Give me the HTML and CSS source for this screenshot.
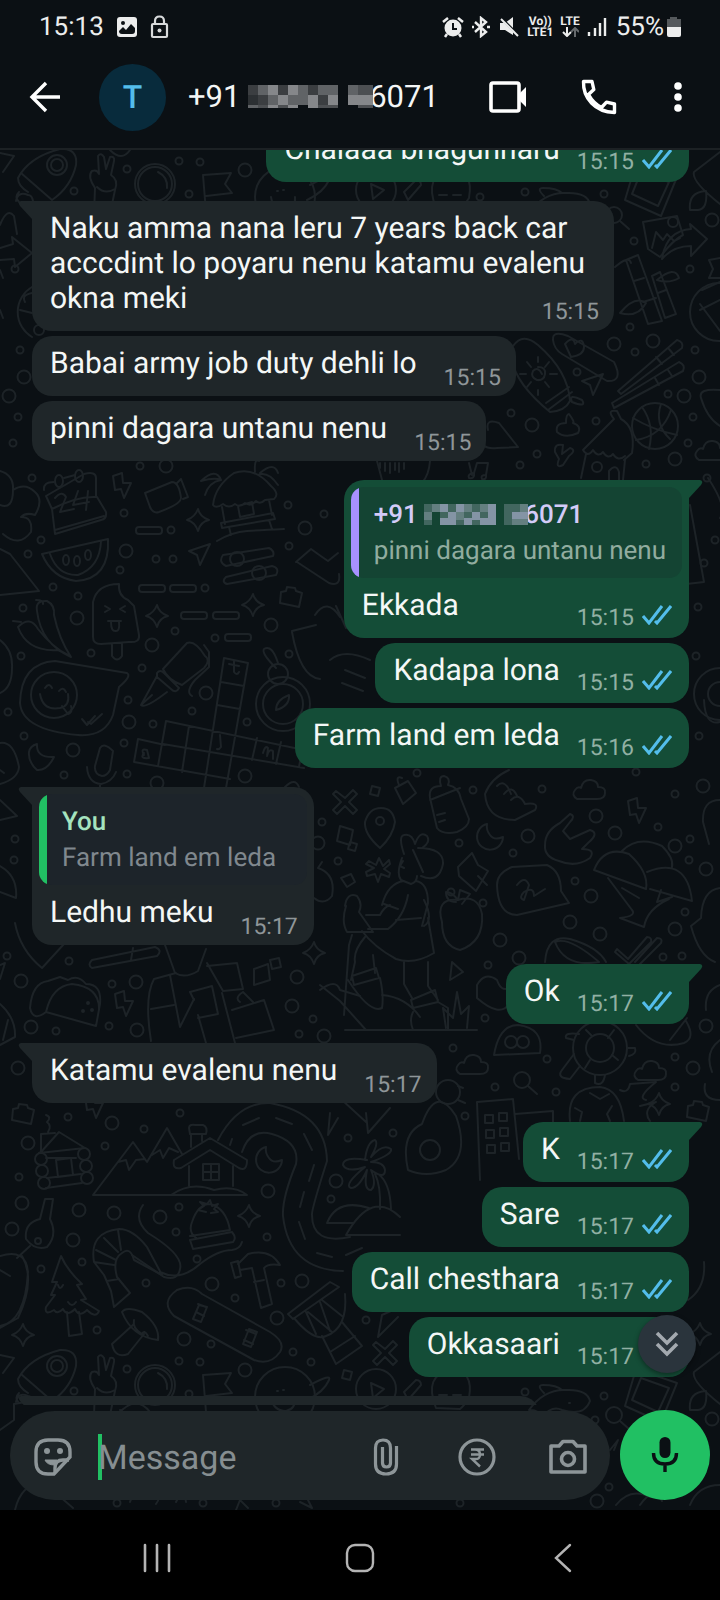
FILE: index.html
```html
<!DOCTYPE html>
<html lang="en">
<head>
<meta charset="utf-8">
<meta name="viewport" content="width=device-width, initial-scale=1">
<title>Chat</title>
<link rel="stylesheet" href="styles.css">
</head>
<body>
<svg class="defs" aria-hidden="true">
  <symbol id="ticks" viewBox="0 0 30 20"><path d="M1 11l6 7L20 1M13 16l2 2L29 1" fill="none" stroke="currentColor" stroke-width="3"/></symbol>
  <symbol id="tail" viewBox="0 0 14 24"><path d="M0 0h11q4 1 1 5L0 18z" fill="currentColor"/></symbol>
  <path id="rings-small" d="M127 169h0M179 161h0M200 162h0M74 191h0M189 194h0M32 478h0M140 466h0M124 513h0M41 540h0M28 554h0M120 570h0M53 587h0M78 596h0M23 608h0M21 656h0M91 653h0M142 668h0M128 700h0M8 712h0M24 736h0M124 743h0M153 724h0M192 711h0M247 722h0M215 638h0M289 654h0M175 631h0M156 559h0M173 559h0M171 530h0M288 505h0M289 546h0M324 514h0M205 588h0M64 775h0M127 774h0M473 790h0M542 789h0M459 843h0M513 853h0M338 861h0M451 892h0M483 903h0M575 881h0M658 827h0M675 794h0M690 839h0M689 860h0M685 912h0M488 965h0M485 1018h0M453 1048h0M547 1059h0M495 1087h0M556 1092h0M675 1057h0M663 957h0M682 956h0M675 1087h0M636 772h0M465 1116h0M393 1133h0M15 839h0M14 860h0M7 956h0M69 961h0M112 984h0M56 1031h0M109 1026h0M313 1019h0M299 1034h0M322 822h0M180 1113h0M68 1117h0M19 1177h0M41 1269h0M82 1262h0M105 1146h0M144 1129h0M179 1207h0M176 1232h0M197 1259h0M146 1283h0M235 1298h0M267 1237h0M281 1283h0M211 1344h0M97 1330h0M331 1199h0M348 1138h0M366 1320h0M293 1352h0M311 1362h0M179 1361h0M200 1362h0M127 1369h0M74 1391h0M189 1394h0M604 194h0M480 197h0M525 192h0M634 241h0M690 269h0M630 327h0M695 350h0M635 352h0M577 372h0M668 394h0M693 417h0M511 413h0M596 421h0M688 443h0M646 464h0M537 454h0M520 465h0M525 1392h0M604 1396h0M595 1420h0M609 1487h0M15 269h0M20 350h0M18 417h0M13 443h0M707 478h0M715 540h0M704 563h0M698 607h0M696 656h0M699 736h0M417 773h0M117 1503h0M203 1503h0M276 1503h0M460 1503h0"/>
  <path id="rings-large" d="M245 170h0M126 551h0M166 466h0M77 618h0M152 645h0M206 693h0M271 625h0M73 750h0M157 783h0M305 528h0M129 722h0M245 776h0M596 816h0M528 836h0M615 833h0M675 846h0M591 896h0M600 934h0M570 922h0M675 929h0M500 940h0M519 958h0M706 869h0M703 786h0M706 1026h0M693 1068h0M31 1027h0M137 1030h0M21 981h0M136 982h0M297 977h0M292 1006h0M324 1036h0M318 843h0M18 1068h0M112 1123h0M28 1143h0M22 1203h0M12 1229h0M79 1210h0M73 1240h0M114 1213h0M160 1217h0M212 1284h0M268 1191h0M302 1281h0M277 1318h0M184 1339h0M336 1181h0M245 1370h0M712 220h0M653 341h0M614 344h0M699 377h0M684 396h0M532 425h0M675 459h0M24 377h0M9 396h0M712 1419h0M597 1501h0"/>
  <g id="spark"><path d="M0-11q2 8 11 11q-9 2-11 11q-3-9-11-11q8-3 11-11z"/></g>
  <g id="bolt"><path d="M-9-12l9-3 1 10 8 0-7 15-3-9-6 1z"/></g>
  <g id="cross"><path d="M-9-11l9 7 8-8 4 4-8 8 8 8-4 4-8-8-8 8-4-4 8-8-8-8z"/></g>
  <g id="moon"><path d="M-3-13a13 13 0 1 0 16 13q-9 4-13-2q-4-5-3-11z"/></g>
  <g id="cloud"><path d="M-13 8q-6-4-2-9q3-4 6-2q2-9 10-8q7 1 7 7q8 0 7 6q0 6-8 6z"/></g>
  <g id="plane"><path d="M-10-4L11-11 1 10-2 0z"/></g>
  <g id="pebble"><path d="M-10-6l5-1 1-4 8 1 1 3 6 2-3 14-19-4z"/></g>
  <g id="lens"><circle r="8"/><path d="M6 6l9 8"/></g>
  <g id="rocket"><path d="M-39 13Q-28-8 3-16Q21-17 19 0Q14 22-5 35L-36 8M-39 13q0 8 10 14M-38 27q-5 5 0 10M-41 36q2-10 12-6 4 0 5 6"/><circle r="10"/><circle r="6"/></g>
  <g id="hand"><path d="M-11 45l1-26q-8-12-3-17q5-2 7 3l-1-18q3-4 6 1l2 12 4-12q5-1 4 4l-3 14q8 5 4 15l-5 24M-8 18q8 8 18 2"/></g>
  <g id="helmet"><circle r="20"/><circle r="17"/><path d="M3-12q10 5 9 16"/></g>
  <g id="flag"><path d="M-12 26l-3-37 28-2-6 11 7 9-26 3"/></g>
  <g id="planet"><circle r="30"/><path d="M-14 0q2 14 15 14q10-2 9-14M-8-6h1M-2-7h1M25-12q22-12 19-5q-5 12-22 20"/></g>
  <g id="play"><circle r="20"/><path d="M-5-6l13 6-11 9z"/></g>
  <g id="bulb"><path d="M-12 18Q-25-15 3-20Q26-20 21 8Q16 16 12 19zM-9 5h8M5 5h8M-3 12q6 4 10 0"/></g>
  <g id="fish"><path d="M-35 13Q-20-8 2-7Q23-8 26 4Q20 20-2 13Q-12 8-22 20Q-26 12-35 13zM5 6h1M-20-4q-8-8-1-8q14 0 19 5"/></g>
  <g id="frame"><path d="M-16-23L25-9 9 30-27 14zM-11-14L17-4 6 20-20 8z"/></g>
</svg>
<div class="phone">
  <div class="statusbar">
    <div class="status-left">
      <span class="clock">15:13</span>
      <svg width="22" height="22" viewBox="0 0 22 22"><rect x="1" y="1" width="20" height="20" rx="3" fill="#eceded"/><circle cx="7" cy="7" r="2" fill="#0b1014"/><path d="M3 15l4-4 3 3 5-6 4 4v3q0 3-3 3H6q-3 0-3-3z" fill="#0b1014"/></svg>
      <svg width="20" height="24" viewBox="0 0 20 24" fill="none" stroke="#d8dadb" stroke-width="2.2"><rect x="2" y="9" width="15" height="13" rx="1"/><path d="M5 9V6q0-4.500 4.500-4.500T14 6v3"/><circle cx="9.500" cy="15.500" r="2" fill="#d8dadb" stroke="none"/></svg>
    </div>
    <div class="status-right">
      <svg width="22" height="22" viewBox="0 0 22 22"><circle cx="11" cy="12" r="8.500" fill="#eceded"/><path d="M1 6l5-4M21 6l-5-4M5 18l-2 3M17 18l2 3" stroke="#eceded" stroke-width="2.500"/><path d="M11 7v6h4" fill="none" stroke="#0b1014" stroke-width="2"/></svg>
      <svg width="20" height="22" viewBox="0 0 20 22" fill="none" stroke="#eceded" stroke-width="2.400"><path d="M4 6l11 10-5 4V2l5 4L4 16"/><path d="M1 11h2M16 11h3"/></svg>
      <svg width="22" height="22" viewBox="0 0 22 22"><path d="M2 7h5l8-6v18l-8-5H2z" fill="#eceded"/><path d="M1 0l20 20" stroke="#0b1014" stroke-width="3"/><path d="M3 3l17 17" stroke="#eceded" stroke-width="2"/></svg>
      <span class="net"><b>Vo))</b><b>LTE1</b></span>
      <span class="net"><b>LTE</b><svg width="18" height="10" viewBox="0 0 18 10" fill="none" stroke-width="2"><path d="M6 0v8M2 5l4 4 4-4" stroke="#eceded"/><path d="M14 10V2M10 5l4-4 4 4" stroke="#666a6d"/></svg></span>
      <svg width="20" height="22" viewBox="0 0 20 22" stroke="#eceded" stroke-width="2.400"><path d="M2 16v4M8 12v8M13 7v13M18 2v18"/></svg>
      <span class="percent">55%</span>
      <svg width="16" height="22" viewBox="0 0 16 22"><path d="M4 1h7v2h4v9H1V3h3z" fill="#55595c"/><path d="M1 11h14v8q0 2-2 2H3q-2 0-2-2z" fill="#eceded"/></svg>
    </div>
  </div>

  <header class="header">
    <button class="icon-btn back" aria-label="Back"><svg width="32" height="32" viewBox="0 0 32 32" fill="none" stroke="#fff" stroke-width="3.400"><path d="M17 2L3 16l14 14M3 16h28"/></svg></button>
    <span class="avatar">T</span>
    <h1 class="name">+91 <svg class="mosaic" width="125" height="24" viewBox="0 0 125 24">
      <g fill="#3b3e41"><path d="M0 0h10v10H0zM30 0h10v10H30zM60 0h10v10H60zM10 10h10v10H10zM70 10h10v10H70z"/></g>
      <g fill="#606366"><path d="M10 0h20v10H10zM50 0h10v10H50zM70 0h20v10H70zM20 10h10v10H20zM40 10h20v10H40zM0 20h10v3H0zM100 0h10v10h-10z"/></g>
      <g fill="#85878a"><path d="M20 0h10v10H20zM40 0h10v10H40zM30 10h10v10H30zM60 10h10v10H60zM80 10h10v10H80zM20 20h10v3H20zM40 20h10v3H40zM60 20h10v3H60zM100 10h25v10h-25z"/></g>
      <g fill="#4c4f52"><path d="M110 0h15v10h-15zM110 20h15v3h-15zM10 20h10v3H10zM30 20h10v3H30zM70 20h20v3H70z"/></g>
      <path d="M0 10h10v10H0z" fill="#2c3033"/></svg><span class="tail-digits">6071</span></h1>
    <button class="icon-btn video" aria-label="Video call"><svg width="40" height="34" viewBox="0 0 40 34"><rect x="3" y="3" width="28" height="28" rx="2" fill="none" stroke="#fff" stroke-width="3.600"/><path d="M31 14l7-7v20l-7-7z" fill="#fff"/></svg></button>
    <button class="icon-btn call" aria-label="Voice call"><svg width="36" height="36" viewBox="0 0 36 36" fill="none" stroke="#fff" stroke-width="3.400" stroke-linejoin="round"><path d="M2.500 2.500h8.500l1.800 8-5.300 5Q12 24 20.500 28.500l5-5.300 8 1.800v8.500Q19 33 10.500 24T2.500 2.500z"/></svg></button>
    <button class="icon-btn more" aria-label="More options"><svg width="10" height="32" viewBox="0 0 10 32" fill="#fff"><circle cx="5" cy="5" r="3.800"/><circle cx="5" cy="16" r="3.800"/><circle cx="5" cy="27" r="3.800"/></svg></button>
  </header>

  <main class="chat">
    <svg class="wallpaper" viewBox="0 150 720 1360" preserveAspectRatio="xMidYMin slice" aria-hidden="true">
      <use class="ring-s" href="#rings-small"/><use class="hole-s" href="#rings-small"/>
      <use class="ring-l" href="#rings-large"/><use class="hole-l" href="#rings-large"/>
      <g class="doodle">
        <!-- top strip, repeated at the foot of the tile -->
        <use href="#rocket" x="57" y="165"/><use href="#rocket" x="57" y="1366"/>
        <use href="#hand" x="105" y="169"/><use href="#hand" x="105" y="1370"/>
        <use href="#helmet" x="155" y="184"/><use href="#helmet" x="155" y="1385"/>
        <use href="#flag" x="218" y="186"/><use href="#flag" x="218" y="1386"/>
        <use href="#planet" x="285" y="197"/><use href="#planet" x="285" y="1397"/>
        <use href="#play" x="376" y="190"/><use href="#play" x="376" y="1389"/>
        <use href="#bulb" x="448" y="190"/><use href="#bulb" x="448" y="1390"/>
        <use href="#fish" x="564" y="200"/><use href="#fish" x="564" y="1397"/>
        <use href="#frame" x="652" y="186"/><use href="#frame" x="652" y="1392"/>
        <use href="#lens" x="614" y="215"/><use href="#lens" x="614" y="1415"/>
        <path d="M720 152L694 172q-3 9 26 32M720 1352l-26 20q-3 9 26 32M690 210q-2-18 16-19q2 18-8 19zM690 1410q-2-18 16-19q2 18-8 19zM404 192l12-12q5 0 5 5l-13 15zM404 1392l12-12q5 0 5 5l-13 15zM0 153l14 3-11 16M0 1355l14 3-11 15M110 150q12 12 20 0"/>
        <!-- right of the first incoming messages -->
        <path d="M643 222l34-6 6 19q-10 5-23 22l-12-8zM652 248l4-16 7 8 4-6 7 7 6-3"/><circle cx="673" cy="222" r="5"/>
        <path d="M662 259q4-28 29-30l-1-5 17 15-16 17v-10q-18 0-29 13z"/>
        <path d="M626 260l12-5 24 66-14 3zM634 281l10-3M643 302l13-4M615 267q14-12 16-4M620 313q15-18 26-10q-8 15-26 10zM652 276l8-4 16 42-11 4zM658 293l8-3M657 280q18-15 22-2q-10 6-22 2"/>
        <circle cx="719" cy="312" r="29"/><path d="M702 290l18-8M700 304l20 27M720 300l-20 10"/>
        <path d="M720 258l-11 2 4 9-4 9 11 0M32 287a29 29 0 0 0 0 50M20 310l12 3M25 302q-4-7 7-9"/><circle cx="39" cy="330" r="5"/>
        <path d="M0 248l13-4-1-7 20 16-17 14-1-8-14 1M0 225q7-18 14-9l3 18M0 270l3 8M0 310l3 8"/>
        <path d="M513 346q10-14 25-1q30 26 32 56-5 10-20 11q-34-28-38-52M546 403l23-16M548 410l24-18M572 402q-4-9 10-2q5 8-10 2"/>
        <path d="M538 363q8 0 7 7t-8 6q-7-3-4-9q5-5 9 3M538 353v5M538 386v5M520 370h6M550 370h7M527 358l4 5M527 383l4-5M549 358l-4 5M549 383l-4-5" transform="translate(0 4)"/>
        <path d="M553 340q-1-10 15-4l46 26q10 20-7 19L562 354q-8-5-9-14zM565 344q8-9 10 0q8-8 9 3q0 8-13 10z"/><use href="#plane" x="592" y="385"/>
        <path d="M618 391l59-51q7 2 5 8l-61 46zM612 403l67-41q7 3 4 9l-69 37zM669 349l5 6M668 370l4 6M656 357l6 7M655 378l4 7"/>
        <circle cx="655" cy="426" r="23"/><path d="M633 418q20 12 44 17M636 440q26-4 35-30M642 407q13 18 7 42M661 404q-7 20 9 35"/>
        <path d="M583 450l31-31q-8-10 3-8l4 8q15 8 11 34l-8 7M583 450q5 8 10 0q5 8 10 2q5 8 10 2q5 8 12 2M586 454l-5 24M625 460l-2 20"/><circle cx="597" cy="467" r="5"/><path d="M609 480v-9q7-8 10 1v8M557 432q-2-9 9-9q0-9 3-9q6 8 4 9q9 3 5 10q-13 6-21-1zM555 452q-1-9 8-7l-1 9 8-6q7 2-1 8l-6 9q-8 4-4-6z"/>
        <use href="#cloud" x="712" y="452"/><path d="M720 390q-22-2-19 8q6 20 19 28M488 430q-3-12 11-7l19 24-21 1q-16 2-19-12"/>
        <path d="M469 463l3 12M474 473q-7 1-5 5q6 1 5-5l3-10 11 0-2 12q-6 0-4 4q5 1 4-4M377 461l9 34M430 461q-2 28-28 31M380 463v5M385 463v8M390 463v10M395 463v7M399 463v9M404 463v6"/>
        <!-- calendar, fruit, hut and crossword -->
        <path d="M44 490q-1-8 10-8M64 478l11-3M84 474q12-3 12 4v19q-19-1-44 12l-6-13zM52 509l3 25 46-14q6-1 5-8l-9-15M55 530l49-14"/><ellipse cx="59" cy="481" rx="4" ry="6"/><ellipse cx="79" cy="476" rx="4" ry="6"/>
        <path d="M55 498q7-8 11-1l-6 15 14-3M78 491l-5 14 16-3M88 491l-2 19"/><use href="#bolt" x="122" y="488"/>
        <path d="M145 493l27-11q7 0 9 16 0 6-22 14-6 2-9-5zM177 483l4-4 7 18-5 2"/>
        <rect x="136" y="527" width="26" height="7" rx="3"/><rect x="139" y="585" width="26" height="7" rx="3"/><rect x="170" y="585" width="26" height="7" rx="3"/><rect x="181" y="612" width="26" height="7" rx="3"/><rect x="213" y="612" width="26" height="7" rx="3"/><rect x="225" y="634" width="26" height="7" rx="3"/>
        <use href="#spark" x="198" y="520"/><use href="#plane" x="199" y="555"/><use href="#spark" x="157" y="616"/><use href="#spark" x="253" y="605"/>
        <path d="M213 505q2-19 21-32q20-7 37 13q9 8 3 13l-9 1q-5 5-9 1q-5 6-11 2q-5 5-10 1q-6 5-12 0q-7 5-10 1zM222 507l3 17M269 500l3 15M221 523l52-10 2 6-53 9zM229 527l2 8M269 520l3 9M217 541q15-9 30-10t37-2M238 506l14-4 2 12-14 3zM201 481q15-14 20-1q-12 2-16 15M201 481q14-4 20-1M255 472q-1-14 4-11M260 473q14-12 18 0M258 475q10-4 20 10"/>
        <path d="M42 554l66-15q2 40-32 42-24-3-34-27zM50 554q8 22 28 21q22-8 23-34"/><ellipse cx="66" cy="560" rx="3" ry="5"/><ellipse cx="77" cy="561" rx="3" ry="5"/><ellipse cx="88" cy="555" rx="3" ry="5"/>
        <path d="M223 555l46-7q6 3 4 8l-47 10q-8-4-3-11zM226 577l46-11q8 2 4 9l-49 9q-6-2-1-7z"/><circle cx="237" cy="559" r="7"/><circle cx="259" cy="573" r="7"/><use href="#pebble" x="291" y="598"/>
        <path d="M93 637V602q4-18 26-18q-1 12 9 16l6 6 5 29q1 8-10 7l-28 2q-8 0-8-7zM112 644v12q5 7 10 0v-12M105 606l5 3-5 3M125 606l-5 3 5 3M108 621h13M111 622q0 10 5 9q4 0 3-9"/>
        <path d="M37 611q-2-11 10-10q8 4 7 14q5 24 17 42q-30-13-34-46zM18 627q12-12 20 2q14 18 30 26l-10-5q-31 2-40-23M36 600q8 0 7 4M13 621l8 1"/>
        <path d="M20 703q1-40 35-42l72 12q5 3-8 14l-6 28q-8 22-35 20-56-5-58-32z"/><circle cx="54" cy="695" r="23"/><path d="M40 694q3 17 20 14 10-2 8-14M45 688q4-6 7 0M59 691q4-5 7 1M62 706l6 8q5-2 3-8M82 719l5 6 8-9M88 722l3 2 11-10"/>
        <path d="M163 669l24-26q8-3 18 13 6 4-1 12l-22 17q-14-5-19-16zM157 673q3-4 7 0l15 15q-3 6-8 1l-14-12zM157 676l-16 29q4 4 26-13M141 705l11-10M204 645l5 7v15l-14 13q-10 12-3 16"/>
        <path d="M224 658l24 5-22 125M224 658l-20 130M221 682l23 4M217 705l23 4M166 721l138 29M163 744l141 24M134 762l4-23 27 6M166 721l-8 45M189 726l-7 46M257 738l-5 22M281 742l-5 22M302 750l-3 17M134 762l96 17M229 664l10 2M234 661v11q3 4 5 0M220 735l1 12q-2 3-4 2M144 755q-4-7 3-5l2 8q-10 1-5-5M263 753q2-8 5-5l-1 8q2-8 6-5v8"/>
        <circle cx="283" cy="704" r="27"/><circle cx="283" cy="704" r="20"/><circle cx="278" cy="674" r="10"/><path d="M276 710q0-10 13-15q1 11-13 15M276 668q-15-15-12-19q8-5 14 14M296 562l15-13q11 8 17 12l10-8M297 562l32 21q12 4 10-9"/>
        <path d="M0 743q14-2 19 24-1 12-19 17M0 770l4 3M29 752q1-6 8-8q-1 14 17 13q-7 14-17 13q-9-8-8-18M95 766l5-18q4-6 13 3l-3 19q-3 6-8 6-8-2-7-10zM87 767q1 16 14 17q11-2 15-12M100 784v4"/>
        <path d="M0 471q14 4 13 19 0 20-13 15M13 490q12-8 22 2q9 8 0 23q-9-3-14 2q12 0 10 15-12 16-28 2M0 549l10 5 29 37-39 4M0 640q13 10 12 28 0 20-12 25"/>
        <!-- right of the quote -->
        <path d="M708 478q20 30 12 40M690 505l14 77-35 4M336 606l10 22 14-20M292 631l24-6M292 632q8 45 28 47M315 615q12-18 25 2M330 660q14-12 40 0M345 670l20 8M342 683l21 8M704 700q1 26 16 22"/><circle cx="720" cy="694" r="26"/><circle cx="720" cy="694" r="12"/>
        <!-- walker and friends -->
        <use href="#cross" x="345" y="802"/><use href="#moon" x="490" y="837"/><use href="#cloud" x="590" y="791"/><use href="#bolt" x="637" y="813"/>
        <path d="M372 786l8 2-2 8-8-2zM395 788l13-7 8 12-13 11zM399 785q-4-10 3-7M380 848q-16-14-15-26q4-14 16-14t14 14q-2 14-15 26M340 826l13 4-3 15-13-4zM350 842l7 2-2 7-7-2zM341 878l10-4 4 8-8 5z"/><circle cx="380" cy="821" r="4"/>
        <path d="M430 798q-2-12 11-12q-3-10 3-10q7 2 4 9q11 2 13 14l8 20q0 8-12 13-15 3-20-4zM430 800l30-12M437 815l8-2M439 822l6-2"/>
        <path d="M509 770q-18 8-24 24 2 26 30 26l20-10q5-8-10-6M497 786q8-8 14 8M504 794q8-10 13 2M511 800q8-8 14 4"/>
        <path d="M545 845q0-14 15-22l10-9q6 2 0 8l-7 9 7 8 20-9q10 3-2 13l-6 6q14 0 8 9-14 10-31 3-15-4-14-16"/>
        <path d="M404 854q-6-18 0-19 8-2 11 9 5-14 12-8 4 6-5 12M418 848q26 0 25 16-4 20-22 12M402 858q-6 16-1 22l10 4q6-2 6-8M403 861l-3 5 4 2M413 850l10 22M382 905q6-22 22-24M416 881q12 2 12 22l-6 23M384 904l14 5M408 895q-4 22-20 34l-20 0M366 915h14q4-8 10-10M428 918l6 35q-20 12-38 6-22-12-34-28M396 920l25-2M424 900q10 20 0 26M345 906q2-14 12-10 6 8 2 16l14 20-26 0q-6-10-1-26M352 935l-3 10-5 70M365 937q-12 14-10 25l-4 18M373 955l2 18M352 976l24-8 3 10-25 7zM404 962v22l8 14M428 962v24l10 14M411 1000l24-10 3 12-25 6zM320 985l20 16 26 29M348 980q22 34 34 28 2-12-2-30M438 1002l10 6v22M413 1012q-4 8 0 18M345 1030h132M382 995q24 2 38 22M446 1028l-3-20 10 10 4-26 4 22 8-8-2 22"/>
        <path d="M376 865l3-7 4 8 6-6 1 4-6 5 6 4-1 4-8-3-3 8-3-8-8 2-1-4 8-4-8-4 3-3z"/>
        <path d="M458 867l14-14 6 12 10 6-12 20-17-15zM478 876l9 9M442 922q-7-24 16-22 20-6 24 14 2 28-22 36-18-4-18-28M458 900l2-10 10 4-8 10M458 900q-6-8-12-8q0 10 10 10M452 962l11 10-13 8zM477 985q8-14 20-5q4 12 12 8v16q-9 14-32-6z"/>
        <path d="M497 885q0-12 15-18l35-2q14 6 14 26l8 12-52 12q-19 0-20-30M517 885q8-10 12 0l-5 15q-6-2 0-8 10-6 10 4l11-7"/>
        <path d="M594 870q10-25 35-16 20 18 17 35zM622 851q16-16 40-5 12 12 10 21M647 872q40-16 45 29l-42-12M608 878l24 32q5 6-12 8l24 9q3-18 25-28M622 888l17 10M661 890l-4 12 15-5"/>
        <path d="M545 962q2-28 25-23 28 8 36 23M555 942q14-6 44 20-34 6-44-20M617 949l11 10 19-22q5 0 4 5l-22 22-14-12zM635 962l22-24q6 0 4 5l-22 22M720 800q-18 0-17 22l6 22M720 888q-18 2-19 30l-10 8q8 30 24 36"/>
        <path d="M494 1055q5-30 24-30 26 3 22 28z"/><circle cx="511" cy="1042" r="6"/><circle cx="523" cy="1042" r="6"/><use href="#cloud" x="473" y="1066"/><use href="#cloud" x="651" y="1072"/><use href="#lens" x="522" y="1080"/><use href="#spark" x="659" y="1104"/><use href="#pebble" x="698" y="1112"/>
        <circle cx="600" cy="1048" r="27"/><circle cx="600" cy="1048" r="14"/><path d="M574 1040l-8-2q-2-6 13-4M580 1066l-10 13q-14-1-8-9l12-16M595 1075v8q8 4 10-8M628 1048h7q2 6-6 8M586 1030l6 6M614 1030l-6 8M618 1060l-6-5M590 1060l-5 8M636 1025q20 26 48 18 12-5 2-22M670 1040l17-22"/>
        <path d="M570 1121q-4-34 30-34 20 2 24 34M590 1093l10 6 9-5M575 1108l7 4-2 9M612 1106l-5 8 3 7M620 1090q8 4 10-6l26-2q-20 16-10 18M640 1106l16-4q-14 8-6 19M720 1100q-18 0-15-16M330 1113l-2 22 10-17M342 1100l24 22M390 1108l-22 25-2-20M480 1180l-3-78 36-3 6 60M515 1114l38-3v40M485 1115h8v8h-8zM499 1113h8v8h-8zM486 1130h8v8h-8zM500 1128h8v8h-8zM487 1145h8v8h-8zM501 1143h8v8h-8zM408 1170q-8-36 14-46 14-40 34-8 14 40-10 54-20 8-38 0"/><circle cx="430" cy="1150" r="10"/>
        <circle cx="448" cy="1092" r="12"/><path d="M458 1086l5 2M458 1100l7 3M720 1040q-16 12-8 32M720 985q-16 6-14 25"/>
        <!-- left side, taco to rocket -->
        <path d="M30 1008q2-25 18-27l12-4 8 3q10-6 18 4 16 0 14 20l-4 22-50-14q-13 10-16-4M46 1012q6-26 26-28 28 3 27 26"/><circle cx="83" cy="1011" r="1"/><circle cx="92" cy="1010" r="1"/><circle cx="88" cy="1003" r="1"/><use href="#bolt" x="124" y="1006"/><use href="#spark" x="314" y="953"/>
        <path d="M254 985v-16l14-5 2 16zM270 960l9-2 2 9-9 2zM42 968q-22-18-27-45M42 968l22-24M92 968l65-12q6-6-2-9l-63 13q-5 5 0 8M133 948l-2 12M165 945l10 28q10 6 23-2l8-22M176 973l-22 6q-10 18-3 62M170 975l10 52 14-28M151 1009l23-4M207 966l30-3 6 26-20 2-16-28M194 1000l-4-8 22-6 6 28-20 4M206 1043l-8-28M232 1010l32-10 10 30-38 8M240 1002q-6-4 3-10l10 10M222 993l13 50"/>
        <path d="M0 1004q16 14 15 33l-15 8M8 1020l-5 20M0 965l5-2-5 16M320 990q16-12 20 0l20 6M0 866q18 10 16 32l-16-6M0 800l17 16-17 4M318 868q18 6 14 28-8 10-18 2M318 868l4-6M285 787q10-10 14 0"/>
        <use href="#pebble" x="23" y="1115"/><use href="#bolt" x="94" y="1108"/>
        <path d="M41 1152l18-20 26 16-46 5zM41 1152v-18l14-1M48 1132q4-6-1-10 5-5-1-7M46 1158h30M47 1178l34-4M46 1188l36-5M56 1160l15-2 2 17-15 2z"/><circle cx="41" cy="1159" r="6"/><circle cx="42" cy="1171" r="6"/><circle cx="44" cy="1183" r="6"/><circle cx="84" cy="1154" r="6"/><circle cx="86" cy="1166" r="6"/><circle cx="87" cy="1178" r="6"/>
        <path d="M93 1195l40-53 14 20 20-34 15 26M93 1195h154M118 1162l8-2 3 10 7-10 9-1M152 1155l8-5 3 8 6-10 9 4M174 1160l36-22 37 22q0 12-8 8l-29-18-29 18q-9 2-7-8M189 1166v20M233 1166v20M189 1128q0-4 6-3h8q5 2 3 9h-16zM191 1135v12M202 1135v6M171 1195q20-14 43-5 20-5 33 5M203 1164h16v16h-16zM211 1164v16M203 1172h16"/><use href="#moon" x="269" y="1160"/>
        <path d="M218 1140q20-38 52-37 56 10 57 58-16 50-15 54 0 30 38 22M242 1152q8-24 30-18 28 8 24 30-14 34-13 52 6 54 60 55M243 1125l16-7M276 1118l16 6M304 1134l8 16M314 1165l-5 16M304 1192l-4 15M299 1222l6 17M317 1253l15 4M346 1255l16-7M230 1145l2-6"/>
        <path d="M367 1160q-24-4-24 5 4 8 22 2-22 18-14 21 8 0 16-18-4 20 4 20 6-5 0-20 14 10 14 0-1-8-14-8 22-8 20-13-8-6-20 8 8-14 4-17-8 2-10 20M375 1174q6 12 5 35M378 1174q12 8 13 35M327 1223q10-25 42-15M327 1223h26M346 1235q26-46 54-18M346 1235h54"/>
        <path d="M143 1205q-10 14 5 28 36 22 32 36-2 12-16 8l-32-22M196 1238q-8-6-4-16 6-18 18-18 16 4 20 26l-40 6M190 1240l42-8q5 6 1 10l-40 7zM206 1212l-8-2 6-4-4-4 7 2 3-4 2 6 6-2-4 5 4 3-7 1"/><use href="#spark" x="249" y="1216"/>
        <path d="M94 1262q-5-30 25-33 14 0 28 18l15 28-28-15q-4-14-12-7-10 6-5 24l13 16-16 14-3-16-7-16zM94 1262l20 3M96 1250l20 10M104 1238l14 14M118 1230l3 20M107 1281l12-2M160 1272q20 10 40-8 18-14 32-14 8-1 10-8"/>
        <path d="M40 1219l5-20h8l-3 20q8 16-3 28-12 4-21-8-2-16 14-20zM30 1246l-13 12M0 1256q26-8 28 16-3 50-28 54M22 1256q14 24-4 62l-18 10M0 1270l10 6"/><circle cx="38" cy="1241" r="3"/>
        <path d="M61 1256q6 14 21 28l-5 1 9 14-5 1 18 11q-3 8-12-1-8 8-12-1-8 8-12 0-6 6-9 1-10 6-8-3l9-12h-4l6-13h-5zM67 1312l2 24 13-2-3-22M58 1285q2 6 5 0M68 1302q4 6 8 0"/>
        <path d="M122 1312q4-6 20 0 18 14 16 28-26-3-36-28M134 1320q-2 8 8 14 2-5 6 2M134 1324l-22 20q3 15 16 10l16-20"/>
        <path d="M177 1290q15-6 25 4l68 38q16 10 10 20-10 14-26 8l-80-44q-14-14 3-26M198 1304l8 3M196 1312l8 4M246 1330l10 4M244 1340l9 4M199 1305l-6 14 8 3 6-15zM249 1329l-6 15 8 3 6-15z"/>
        <path d="M231 1263l7-2 3 15-6 2zM238 1264l10-10q22-6 32 11-12-2-16 3l8 36-11 4-9-40-12 2M254 1282l10-2"/>
        <path d="M288 1314l42-32 9 5-46 32zM294 1318q20 24 32 18 22-8 19-42M306 1312l10 22M320 1302l10 29M308 1312l24 20M322 1300l20 16M322 1336l14 28 26-18-20-24M330 1352l25-16"/><use href="#cross" x="385" y="1353"/><use href="#spark" x="23" y="1335"/>
        <use href="#spark" x="700" y="1334"/><path d="M344 1370l8 2-2 8-8-2zM378 1337l4-22 22-10M378 1337l20-20M688 1300q18-12 16-38"/>
        <path d="M118 1414q18-20 32-2M120 1410l6 6M15 1510q6-26 28-28l30 26M0 1430l14-10v-16l18-3M130 1502q3-10 12-6 6-8 12 0 8 0 2 8M176 1502q8-16 10 0M236 1510l4-10 8 8M300 1502l12 6-4-8M610 1450l8-10-4 10M616 1505q14-18 34-8M640 1505q14-20 22-4M690 1505q8-20 30-20"/>
      </g>
    </svg>

    <section class="messages">
      <article class="msg out"><p>Chalaaa bhagunnaru</p><time>15:15</time><svg class="ticks"><use href="#ticks"/></svg></article>

      <article class="msg in first long"><svg class="tail"><use href="#tail"/></svg><p>Naku amma nana leru 7 years back car acccdint lo poyaru nenu katamu evalenu okna meki <time>15:15</time></p></article>
      <article class="msg in"><p>Babai army job duty dehli lo</p><time>15:15</time></article>
      <article class="msg in"><p>pinni dagara untanu nenu</p><time>15:15</time></article>

      <article class="msg out first quoted"><svg class="tail"><use href="#tail"/></svg>
        <blockquote class="quote"><strong>+91 <svg class="mosaic small" width="104" height="21" viewBox="0 0 104 21">
          <path d="M0 0h104v21H0z" fill="#42665f"/><g fill="#8494a5"><path d="M16 0h8v8h-8zM32 0h8v8h-8zM48 8h8v8h-8zM64 0h8v16h-8zM16 14h16v7H16zM40 14h8v7h-8zM24 8h8v8h-8zM56 14h16v7H56zM88 8h16v7H88z"/></g><g fill="#647f80"><path d="M8 0h8v8H8zM40 0h8v8h-8zM56 0h8v8h-8zM32 8h8v8h-8zM0 8h8v8H0zM96 0h8v8h-8zM88 15h16v6H88z"/></g><path d="M72 0h8v21h-8zM8 8h8v13H8z" fill="#144433"/></svg><span class="tail-digits">6071</span></strong><span>pinni dagara untanu nenu</span></blockquote>
        <div class="row"><p>Ekkada</p><time>15:15</time><svg class="ticks"><use href="#ticks"/></svg></div></article>
      <article class="msg out"><p>Kadapa lona</p><time>15:15</time><svg class="ticks"><use href="#ticks"/></svg></article>
      <article class="msg out"><p>Farm land em leda</p><time>15:16</time><svg class="ticks"><use href="#ticks"/></svg></article>

      <article class="msg in first quoted"><svg class="tail"><use href="#tail"/></svg>
        <blockquote class="quote"><strong>You</strong><span>Farm land em leda</span></blockquote>
        <div class="row"><p>Ledhu meku</p><time>15:17</time></div></article>

      <article class="msg out first"><svg class="tail"><use href="#tail"/></svg><p>Ok</p><time>15:17</time><svg class="ticks"><use href="#ticks"/></svg></article>

      <article class="msg in first"><svg class="tail"><use href="#tail"/></svg><p>Katamu evalenu nenu</p><time>15:17</time></article>

      <article class="msg out first"><svg class="tail"><use href="#tail"/></svg><p>K</p><time>15:17</time><svg class="ticks"><use href="#ticks"/></svg></article>
      <article class="msg out"><p>Sare</p><time>15:17</time><svg class="ticks"><use href="#ticks"/></svg></article>
      <article class="msg out"><p>Call chesthara</p><time>15:17</time><svg class="ticks"><use href="#ticks"/></svg></article>
      <article class="msg out"><p>Okkasaari</p><time>15:17</time><svg class="ticks"><use href="#ticks"/></svg></article>

      <article class="msg in first next"><svg class="tail"><use href="#tail"/></svg></article>
    </section>

    <button class="jump" aria-label="Scroll to latest"><svg width="24" height="26" viewBox="0 0 24 26" fill="none" stroke="#a3a9af" stroke-width="3.600"><path d="M2 2l10 10L22 2M2 13l10 10 10-10"/></svg></button>

    <form class="composer">
      <div class="field">
        <button type="button" class="icon-btn" aria-label="Stickers"><svg width="40" height="40" viewBox="0 0 40 40" fill="none" stroke="#8d9598" stroke-width="3.400"><path d="M15 3h10q12 0 12 12v5L21 37h-6Q3 37 3 25V15Q3 3 15 3z"/><path d="M22 36v-5q0-8 8-8h6"/><path d="M12 23h12l-2 5q-8 0-10-5z" fill="#8d9598" stroke-width="1"/><circle cx="14" cy="14" r="3" fill="#8d9598" stroke="none"/><circle cx="27" cy="14" r="3" fill="#8d9598" stroke="none"/></svg></button>
        <span class="caret"></span>
        <input type="text" placeholder="Message" aria-label="Message">
        <button type="button" class="icon-btn" aria-label="Attach"><svg width="40" height="40" viewBox="0 0 40 40" fill="none" stroke="#8d9598" stroke-width="3.200"><path d="M30.500 9v18q0 10-10.500 10T9.500 27V11q0-8 7.500-8t7.500 8v15q0 4-4 4t-4-4V10"/></svg></button>
        <button type="button" class="icon-btn" aria-label="Pay"><svg width="40" height="40" viewBox="0 0 40 40" fill="none" stroke="#8d9598" stroke-width="3.200"><circle cx="20" cy="20" r="17"/><path d="M14 12.500h13M14 17.500h13M14 12.500h4q5 0 5 5t-5 4.500h-3l8 7.500" stroke-width="2.400"/></svg></button>
        <button type="button" class="icon-btn" aria-label="Camera"><svg width="40" height="40" viewBox="0 0 40 40" fill="none" stroke="#8d9598" stroke-width="3.600" stroke-linejoin="round"><path d="M3 9h8l4-4.500h10L29 9h8v26H3z"/><circle cx="20" cy="22" r="6.500"/></svg></button>
      </div>
      <button type="button" class="mic" aria-label="Record voice message"><svg width="28" height="38" viewBox="0 0 28 38"><rect x="8.500" y="1" width="11" height="21" rx="5.500" fill="#0b1014"/><path d="M2.500 17q0 11 11.500 11t11.500-11M14 28v8" fill="none" stroke="#0b1014" stroke-width="3.400"/></svg></button>
    </form>
  </main>

  <nav class="navbar">
    <button aria-label="Recent apps"><svg width="30" height="30" viewBox="0 0 30 30" stroke="#b4b4b4" stroke-width="2.600" stroke-linecap="round"><path d="M3 2v26M15 2v26M27 2v26"/></svg></button>
    <button aria-label="Home"><svg width="30" height="30" viewBox="0 0 30 30" fill="none" stroke="#b4b4b4" stroke-width="2.400"><rect x="2" y="2" width="26" height="26" rx="8"/></svg></button>
    <button aria-label="Back"><svg width="20" height="30" viewBox="0 0 20 30" fill="none" stroke="#b4b4b4" stroke-width="2.400" stroke-linecap="round"><path d="M17 2L3 15l14 13"/></svg></button>
  </nav>
</div>
</body>
</html>
```
FILE: styles.css
```css
* { box-sizing: border-box; }
body { margin: 0; background: #0b1014; color: #f4f6f6; font-family: Roboto, "Liberation Sans", sans-serif; text-rendering: geometricPrecision; }
button { padding: 0; border: 0; background: none; display: flex; align-items: center; justify-content: center; }
svg { display: block; flex: none; }
p, h1, blockquote { margin: 0; }
.defs { position: absolute; width: 0; height: 0; }
.phone { display: flex; flex-direction: column; height: 100vh; }

.statusbar { display: flex; justify-content: space-between; align-items: center; height: 53px; padding: 0 38px 0 39px; color: #eceded; font-size: 26px; }
.status-left, .status-right { display: flex; align-items: center; }
.status-left { gap: 12px; }
.status-right { gap: 7px; }
.percent { margin: 0 -5px 0 2px; }
.net { display: flex; flex-direction: column; align-items: center; font-size: 12px; line-height: 11px; }
.net b { font-weight: 700; }

.header { display: flex; align-items: center; height: 97px; padding: 0 37px 7px 29px; border-bottom: 2px solid #1c2124; }
.avatar { display: flex; align-items: center; justify-content: center; width: 67px; height: 67px; margin-left: 38px; border-radius: 50%; background: #082b3c; color: #53bdeb; font-size: 32px; font-weight: 500; }
.name { display: flex; align-items: center; flex: 1; margin-left: 22px; font-size: 31px; line-height: 36px; font-weight: 400; white-space: pre; }
.mosaic { position: relative; }
.tail-digits { margin-left: -4px; }
.call { margin-left: 53px; }
.more { margin-left: 56px; }

.chat { position: relative; flex: 1; min-height: 0; display: flex; flex-direction: column; overflow: hidden; }
.wallpaper { position: absolute; inset: 0; width: 100%; height: 100%; fill: none; stroke: #1d2327; stroke-width: 2; stroke-linecap: round; stroke-linejoin: round; }
.ring-s { stroke-width: 9; }
.hole-s { stroke-width: 5; stroke: #0b1014; }
.ring-l { stroke-width: 15; }
.hole-l { stroke-width: 11; stroke: #0b1014; }

.messages { position: relative; flex: 1; min-height: 0; overflow: hidden; display: flex; flex-direction: column; align-items: flex-start; gap: 5px; margin-top: -28px; padding: 0 31px 0 32px; clip-path: inset(28px 0 0 0); }
.msg { position: relative; flex: none; display: flex; align-items: flex-end; min-height: 60px; border-radius: 20px; }
.msg p { padding: 10px 0 15px; font-size: 30px; line-height: 35px; color: #f4f7f6; }
.msg time { font-size: 23px; line-height: 27px; }
.in { padding: 0 15px 0 18px; background: #1f2629; color: #1f2629; }
.in time { margin: 0 0 5px 27px; color: #8f9699; }
.out { align-self: flex-end; padding: 0 17px 0 18px; background: #144d37; color: #144d37; }
.out time { margin: 0 0 7px 17px; color: #91b0a3; }
.first { margin-top: 14px; }
.in.first { border-top-left-radius: 0; }
.out.first { border-top-right-radius: 0; }
.tail { position: absolute; top: 0; width: 14px; height: 24px; }
.in .tail { right: 100%; transform: scaleX(-1); }
.out .tail { left: 100%; }
.ticks { width: 30px; height: 20px; margin: 0 0 13px 8px; color: #53bdeb; }

.long { max-width: 582px; }
.long p { padding-right: 13px; }
.long time { float: right; margin: 17px -13px -9px 0; }

.quoted { flex-direction: column; align-items: stretch; padding: 7px 7px 0; }
.quote { position: relative; overflow: hidden; display: flex; flex-direction: column; justify-content: center; height: 91px; padding: 0 16px 0 23px; border-radius: 13px; background: #144433; font-size: 26px; line-height: 36px; white-space: pre; color: #91ac9f; }
.quote::before { content: ""; position: absolute; inset: 0 auto 0 0; width: 8px; background: #a791ff; }
.quote strong { display: flex; align-items: center; font-weight: 500; color: #d3cbf8; }
.in .quote { background: #1d242a; color: #80888e; }
.in .quote::before { background: #21c063; }
.in .quote strong { color: #a5e3bf; }
.row { display: flex; align-items: flex-end; justify-content: space-between; padding: 0 10px 0 11px; }
.out .row time { margin-left: auto; }
.in .row { padding-right: 9px; }
.next { width: 508px; }

.jump { position: absolute; right: 24px; bottom: 137px; width: 58px; height: 58px; border-radius: 50%; background: #2a343c; box-shadow: 0 2px 5px #0006; }

.composer { position: relative; display: flex; align-items: flex-end; gap: 10px; margin: 0; padding: 5px 10px 10px; }
.field { flex: 1; min-width: 0; display: flex; align-items: center; height: 89px; padding: 2px 22px 0 23px; border-radius: 45px; background: #1f2629; }
.field .icon-btn + .icon-btn { margin-left: 51px; }
.caret { flex: none; width: 4px; height: 46px; margin: 0 -4px 0 25px; background: #21c063; }
input { flex: 1; min-width: 0; padding: 2px 0 0; border: 0; outline: 0; background: none; font: 34px/40px Roboto, sans-serif; color: #f4f6f6; text-rendering: inherit; }
input::placeholder { color: #868e91; opacity: 1; }
.mic { width: 90px; height: 90px; border-radius: 50%; background: #21c063; }

.navbar { display: flex; align-items: center; height: 90px; padding: 5px 56px 0; background: #000; }
.navbar button { flex: 1; }
```
